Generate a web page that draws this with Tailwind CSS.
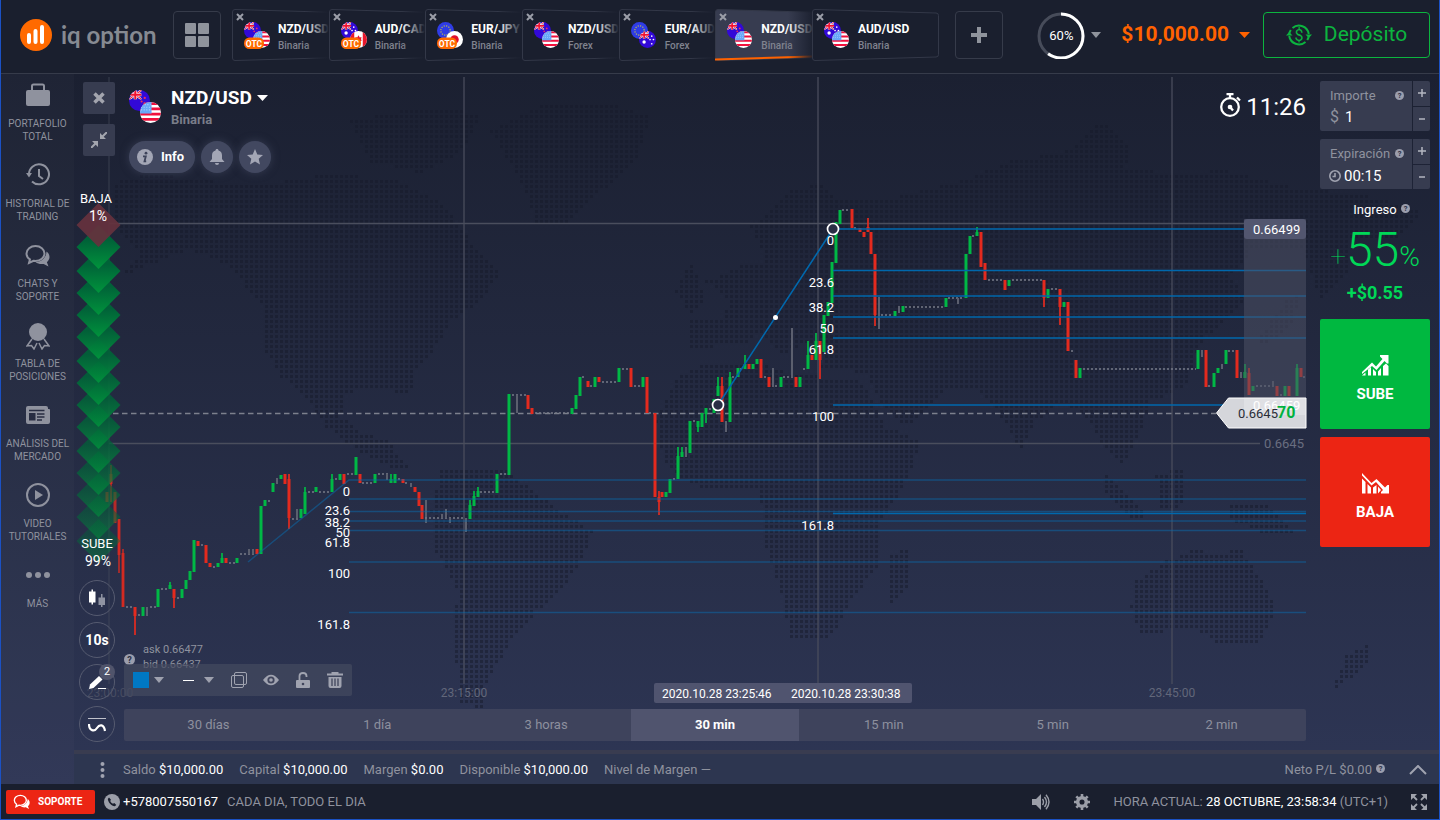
<!DOCTYPE html>
<html lang="es">

<head>
    <meta charset="UTF-8">
    <meta name="viewport" content="width=device-width, initial-scale=1.0">
    <title>IQ Option</title>
    <script src="https://cdn.jsdelivr.net/npm/@tailwindcss/browser@4"></script>
</head>

<body class="bg-[#1a1f2e] font-['Roboto',sans-serif] text-[#8f929e]">

<!-- shared symbols: flags and the help mark -->
<svg class="absolute size-0" aria-hidden="true">
    <defs>
        <clipPath id="round"><circle cx="10" cy="10" r="10"/></clipPath>
    </defs>
    <symbol id="jack" viewBox="0 0 12 9">
        <rect width="12" height="9" fill="#1c1bb0"/>
        <path d="M0 0l12 9M12 0L0 9" stroke="#fff" stroke-width="2"/>
        <path d="M0 0l12 9M12 0L0 9" stroke="#f01838" stroke-width="1"/>
        <path d="M6 0v9M0 4.500h12" stroke="#fff" stroke-width="3"/>
        <path d="M6 0v9M0 4.500h12" stroke="#f01030" stroke-width="2"/>
    </symbol>
    <symbol id="nz" viewBox="0 0 20 20">
        <g clip-path="url(#round)">
            <rect width="20" height="20" fill="#3209d8"/>
            <use href="#jack" width="12" height="9"/>
            <circle cx="15" cy="7.500" r="1.100" fill="#f0305a"/>
            <circle cx="15" cy="13" r="1.300" fill="#f0305a"/>
            <circle cx="12" cy="11" r="1" fill="#f0305a"/>
        </g>
    </symbol>
    <symbol id="au" viewBox="0 0 20 20">
        <g clip-path="url(#round)">
            <rect width="20" height="20" fill="#3209d8"/>
            <use href="#jack" width="12" height="9"/>
            <circle cx="6" cy="13" r="2" fill="#fff"/>
            <circle cx="15" cy="6" r="1" fill="#fff"/>
            <circle cx="17" cy="10" r="1" fill="#fff"/>
            <circle cx="13" cy="10" r="1" fill="#fff"/>
            <circle cx="15" cy="15" r="1" fill="#fff"/>
        </g>
    </symbol>
    <symbol id="us" viewBox="0 0 20 20">
        <g clip-path="url(#round)">
            <rect width="20" height="20" fill="#fff"/>
            <path d="M0 1.500h20M0 6.500h20M0 11.500h20M0 16.500h20" stroke="#f0103c" stroke-width="2.500"/>
            <rect width="11" height="11" fill="#68a8f8"/>
            <path d="M2 2.500h8M1 5h9M1 7.500h9" stroke="#a8d0ff" stroke-dasharray="1 1.500"/>
        </g>
    </symbol>
    <symbol id="ca" viewBox="0 0 20 20">
        <g clip-path="url(#round)">
            <rect width="20" height="20" fill="#fff"/>
            <path d="M0 0h5v20H0zM15 0h5v20h-5z" fill="#e8182c"/>
            <path d="M10 5l1.500 2.500 2-.5-.5 3 1 1-3 2v2h-2v-2l-3-2 1-1-.5-3 2 .5z" fill="#e8182c"/>
        </g>
    </symbol>
    <symbol id="jp" viewBox="0 0 20 20">
        <circle cx="10" cy="10" r="10" fill="#fff"/>
        <circle cx="10" cy="10" r="5" fill="#e0102c"/>
    </symbol>
    <symbol id="eu" viewBox="0 0 20 20">
        <circle cx="10" cy="10" r="10" fill="#2f3ce6"/>
        <circle cx="10" cy="10" r="5.500" fill="none" stroke="#b8b850" stroke-width="1.500" stroke-dasharray="1.400 1.480"/>
    </symbol>
    <symbol id="help" viewBox="0 0 12 12">
        <circle cx="6" cy="6" r="6" fill="#9b9ead"/>
        <text x="6" y="9.500" text-anchor="middle" font-size="10" font-weight="700" fill="#2a2f44">?</text>
    </symbol>
    <symbol id="chats" viewBox="0 0 26 24">
        <path d="M10.500 2C5.500 2 1.500 5.400 1.500 9.500c0 2.400 1.300 4.500 3.400 5.900L4 19l4.500-2.200c.7.100 1.300.2 2 .2 5 0 9-3.400 9-7.500S15.500 2 10.500 2z" fill="none" stroke="currentColor" stroke-width="2"/>
        <path d="M21.500 7.500c2 1.400 3 3.300 3 5.500 0 2-1 3.900-2.600 5.200l1.600 4.300-4.800-2.600c-3.200.5-6-.1-8.200-1.900 5.600 0 10.800-4 11-10.500z" fill="currentColor"/>
    </symbol>
    <symbol id="outline" viewBox="0 0 127 52" preserveAspectRatio="none">
        <path d="M3 .5L124 4q2.500 0 2.500 2.500v39q0 2.500-2.500 2.500L3 51.500Q.5 51.500.5 49V3Q.5.500 3 .5z" stroke="#333848"/>
    </symbol>
</svg>

<div class="flex min-h-screen flex-col border-x border-b border-[#1b51c4]">

    <header class="flex h-[74px] shrink-0 items-center border-b border-[#363b4a] bg-[#1a1f2e] pr-[9px] pb-[3px] pl-[19px]">
        <a href="#" class="flex w-[153px] shrink-0 items-center gap-[9px]" aria-label="iq option">
            <svg class="size-8" viewBox="0 0 32 32">
                <circle cx="16" cy="16" r="16" fill="#ff6a00"/>
                <path d="M9 16v7M15.500 12v11M22 8v15" stroke="#fff" stroke-width="4" stroke-linecap="round"/>
            </svg>
            <span class="font-[Lato] text-2xl leading-8 font-bold text-[#868a92]">iq option</span>
        </a>
        <button type="button" aria-label="Activos" class="flex size-12 shrink-0 items-center justify-center rounded border border-[#363b4a]">
            <svg class="size-6" viewBox="0 0 24 24" fill="#8f939c">
                <rect width="11" height="11" rx="1"/>
                <rect x="13" width="11" height="11" rx="1"/>
                <rect y="13" width="11" height="11" rx="1"/>
                <rect x="13" y="13" width="11" height="11" rx="1"/>
            </svg>
        </button>

        <nav class="ml-[11px] flex shrink-0">
            <div class="grid w-[580px] grid-cols-6" id="tabs"></div>
            <div class="w-[127px]" id="lastTab"></div>
        </nav>

        <button type="button" aria-label="Nueva" class="ml-4 flex size-12 shrink-0 items-center justify-center rounded border border-[#363b4a]">
            <svg class="size-4" viewBox="0 0 16 16"><path d="M8 0v16M0 8h16" stroke="#8f939c" stroke-width="4"/></svg>
        </button>

        <div class="ml-auto flex shrink-0 items-center">
            <button type="button" class="flex items-center gap-[6px]">
                <span class="relative flex size-12 items-center justify-center pt-[2px] text-[13px] text-white">
                    <svg class="absolute inset-0 size-12" viewBox="0 0 48 48" fill="none" stroke-width="3">
                        <circle cx="24" cy="25" r="22" stroke="#474c5a"/>
                        <circle cx="24" cy="25" r="22" stroke="#fff" pathLength="100" stroke-dasharray="60 40" transform="rotate(-90 24 25)"/>
                    </svg>
                    60%
                </span>
                <svg class="h-[6px] w-[10px]" viewBox="0 0 10 6"><path d="M0 0h10L5 6z" fill="#8f939c"/></svg>
            </button>
            <button type="button" class="ml-[20px] flex items-center gap-[10px] text-[21px] font-bold text-[#ff6200]">
                $10,000.00
                <svg class="h-[6px] w-[11px]" viewBox="0 0 11 6"><path d="M0 0h11L5.500 6z" fill="#ff6200"/></svg>
            </button>
            <button type="button" class="ml-[13px] flex h-[46px] w-[167px] items-center justify-center gap-3 rounded border border-[#0cb43f] text-[21px] text-[#0cb43f]">
                <svg class="h-[22px] w-[26px]" viewBox="0 0 26 22" fill="none" stroke="currentColor" stroke-width="2">
                    <path d="M6.500 4A10 10 0 0 1 22.800 10M3.200 12A10 10 0 0 0 19.500 18M3.200 10A10 10 0 0 1 4.800 6M22.800 12A10 10 0 0 1 21.200 16"/>
                    <path d="M0 11.500h6.500L3.200 8zM19.500 10.500H26L22.800 14z" fill="currentColor" stroke="none"/>
                    <text x="13" y="16.500" text-anchor="middle" font-size="16" fill="currentColor" stroke="none">$</text>
                </svg>
                Depósito
            </button>
        </div>
    </header>

    <div class="flex grow bg-linear-to-b from-[#1b2031] to-[#2e3655]">

        <nav class="flex w-[73px] shrink-0 flex-col bg-white/2 text-center text-[10px] leading-[13px] text-[#8f929e]">
            <a href="#" class="flex h-20 flex-col items-center pt-2">
                <svg class="h-7 w-6" viewBox="0 0 24 28" fill="currentColor"><path d="M2 8h20q2 0 2 2v12q0 2-2 2H2q-2 0-2-2V10q0-2 2-2z"/><path d="M6 9V4q0-1.500 1.500-1.500h9Q18 2.500 18 4v5" fill="none" stroke="currentColor" stroke-width="2"/></svg>
                <span class="mt-[7px]">PORTAFOLIO<br>TOTAL</span>
            </a>
            <a href="#" class="flex h-20 flex-col items-center pt-2">
                <svg class="h-7 w-6" viewBox="0 0 24 28" fill="none" stroke="currentColor" stroke-width="2"><path d="M3 13A10 10 0 1 1 6 19.500"/><path d="M13 7v7l4 3"/><path d="M0 11h6L3 15.500z" fill="currentColor" stroke="none"/></svg>
                <span class="mt-[7px]">HISTORIAL DE<br>TRADING</span>
            </a>
            <a href="#" class="flex h-20 flex-col items-center pt-2">
                <svg class="h-7 w-[26px]"><use href="#chats"/></svg>
                <span class="mt-[7px]">CHATS Y<br>SOPORTE</span>
            </a>
            <a href="#" class="flex h-20 flex-col items-center pt-2">
                <svg class="h-7 w-6" viewBox="0 0 24 28" fill="currentColor"><circle cx="12" cy="10" r="9"/><path d="M6 17l-5 7 4.500-.5L8 27l3-6M18 17l5 7-4.500-.5L16 27l-3-6" fill="none" stroke="currentColor" stroke-width="1.500"/></svg>
                <span class="mt-[7px]">TABLA DE<br>POSICIONES</span>
            </a>
            <a href="#" class="flex h-20 flex-col items-center pt-2">
                <svg class="h-7 w-6" viewBox="0 0 24 28"><path d="M2 4h18q2 0 2 2v1h1q1 0 1 1v12q0 2-2 2H2q-2 0-2-2V6q0-2 2-2z" fill="currentColor"/><path d="M3 8.500h15.500M11 12h7.500M11 15h7.500M11 18h5" stroke="#282d42" stroke-width="1.300"/><path d="M3 11h6.500v7.500H3z" fill="#282d42"/></svg>
                <span class="mt-[7px]">ANÁLISIS DEL<br>MERCADO</span>
            </a>
            <a href="#" class="flex h-20 flex-col items-center pt-2">
                <svg class="h-7 w-6" viewBox="0 0 24 28"><circle cx="12" cy="13" r="11" fill="none" stroke="currentColor" stroke-width="2"/><path d="M9 8l8 5-8 5z" fill="currentColor"/></svg>
                <span class="mt-[7px]">VIDEO<br>TUTORIALES</span>
            </a>
            <a href="#" class="flex h-20 flex-col items-center pt-2">
                <svg class="h-7 w-6" viewBox="0 0 24 28" fill="currentColor"><circle cx="3" cy="13" r="3"/><circle cx="12" cy="13" r="3"/><circle cx="21" cy="13" r="3"/></svg>
                <span class="mt-[7px]">MÁS</span>
            </a>
        </nav>

        <div class="flex min-w-0 grow flex-col">
            <main class="relative flex grow">
                <svg class="absolute inset-0 h-full w-full" viewBox="74 74 1365 676" preserveAspectRatio="xMidYMid slice" font-size="13" id="chart">
                    <defs>
                        <linearGradient id="rise" x1="0" y1="0" x2="0" y2="1">
                            <stop offset=".35" stop-color="#006238"/>
                            <stop offset="1" stop-color="#00943c"/>
                        </linearGradient>
                    </defs>
                    <path id="map" fill="#161a2a" fill-opacity=".5"/>

                    <g stroke="#4a4e5d">
                        <path d="M109 77v607" stroke-opacity=".45" stroke-width="1.500"/>
                        <path d="M464 77v607M818 77v607M1172 77v607" stroke-opacity=".85" stroke-width="1.500"/>
                        <path d="M109 223.500h1197" stroke-width="1.500"/>
                        <path d="M109 443.500h1151" stroke-width="1.600"/>
                    </g>
                    <path d="M113 413.500h1103" stroke="#7c808d" stroke-width="1.300" stroke-dasharray="5.500 3.500"/>

                    <g id="candles"></g>

                    <path d="M248 562L349 480h957M349 499h957M349 511.500h957M349 521h957M349 530.500h957M349 562h957M349 612.500h957" fill="none" stroke="#0a6cae" stroke-opacity=".5" stroke-width="1.500"/>
                    <path d="M718 405L833 229h473M833 270.500h473M833 296h473M833 317h473M833 338h473M833 405h473M833 513.500h473" fill="none" stroke="#0068ad" stroke-width="1.600"/>

                    <g fill="#fff" text-anchor="end">
                        <text x="350" y="496">0</text>
                        <text x="350" y="515">23.6</text>
                        <text x="350" y="527">38.2</text>
                        <text x="350" y="537">50</text>
                        <text x="350" y="547">61.8</text>
                        <text x="350" y="578">100</text>
                        <text x="350" y="629">161.8</text>
                        <text x="834" y="245">0</text>
                        <text x="834" y="287">23.6</text>
                        <text x="834" y="312">38.2</text>
                        <text x="834" y="333">50</text>
                        <text x="834" y="354">61.8</text>
                        <text x="834" y="421">100</text>
                        <text x="834" y="530">161.8</text>
                    </g>
                    <g fill="#2a2f45" stroke="#fff" stroke-width="1.700">
                        <circle cx="718" cy="405" r="5.500"/>
                        <circle cx="833" cy="229" r="5.500"/>
                    </g>
                    <circle cx="775.500" cy="317.500" r="2.500" fill="#fff"/>

                    <!-- price scale -->
                    <path d="M1244 219h62v194h-62z" fill="#4d5064" fill-opacity=".55"/>
                    <rect x="1244" y="219" width="62" height="20" rx="3" fill="#52566f"/>
                    <text x="1253" y="234" fill="#fff">0.66499</text>
                    <path d="M1216.500 413l12-15h77.500v30h-77.500z" fill="#d5d6db" stroke="#fff"/>
                    <rect x="1244" y="399" width="61" height="16" fill="#fff" fill-opacity=".25"/>
                    <text x="1253" y="410" fill="#fff">0.66459</text>
                    <text x="1238" y="418" fill="#2a2d38">0.6645</text>
                    <text x="1277" y="418" font-size="16" font-weight="700" fill="#00b23e">70</text>
                    <text x="1264" y="448" fill="#696e80">0.6645</text>

                    <!-- time scale -->
                    <g fill="#62677a" text-anchor="middle" font-size="12">
                        <text x="110" y="697" fill="#474c62">23:00:00</text>
                        <text x="464" y="697">23:15:00</text>
                        <text x="1172" y="697">23:45:00</text>
                    </g>
                    <rect x="654" y="683" width="258" height="20" rx="2" fill="#50546f"/>
                    <g fill="#fff" font-size="12">
                        <text x="662" y="698">2020.10.28 23:25:46</text>
                        <text x="791" y="698">2020.10.28 23:30:38</text>
                    </g>

                    <g id="mood"></g>
                    <g fill="#fff" text-anchor="middle">
                        <text x="96" y="203">BAJA</text>
                        <text x="98" y="221" font-size="14">1%</text>
                        <text x="97" y="548">SUBE</text>
                        <text x="98" y="566" font-size="14">99%</text>
                    </g>
                </svg>

                <section class="relative flex min-w-0 grow flex-col justify-between pl-[5px] pb-2">
                    <div class="flex pt-2 pl-1">
                        <div class="flex flex-col gap-[10px]">
                            <button type="button" aria-label="Cerrar" class="flex size-8 items-center justify-center rounded-xs bg-[#373c50]">
                                <svg class="size-3" viewBox="0 0 12 12"><path d="M1.500 1.500l9 9M10.500 1.500l-9 9" stroke="#a3a5ae" stroke-width="3.500"/></svg>
                            </button>
                            <button type="button" aria-label="Reducir" class="flex size-8 items-center justify-center rounded-xs bg-[#373c50]">
                                <svg class="size-4" viewBox="0 0 16 16" stroke="#a3a5ae" stroke-width="2"><path d="M0 16l5-5M16 0l-5 5"/><path d="M1 9h6v6zM9 1v6h6z" fill="#a3a5ae" stroke="none"/></svg>
                            </button>
                        </div>
                        <div class="ml-[14px] flex flex-col">
                            <button type="button" class="flex text-left">
                                <svg class="mt-2 h-[33px] w-8" viewBox="0 0 32 33"><use href="#nz" width="21" height="21"/><use href="#us" x="11" y="12" width="21" height="21"/></svg>
                                <span class="ml-[10px]">
                                    <span class="mt-1 flex h-6 items-center gap-[5px] text-[19px] leading-6 font-bold text-white">NZD/USD
                                        <svg class="h-[6px] w-[11px]" viewBox="0 0 11 6"><path d="M0 0h11L5.500 6z" fill="#fff"/></svg>
                                    </span>
                                    <span class="block text-[13px] leading-5 font-bold text-[#797d89]">Binaria</span>
                                </span>
                            </button>
                            <div class="mt-[11px] flex gap-[6px]">
                                <button type="button" class="flex h-8 items-center gap-2 rounded-full bg-[#424860] px-2 pr-[11px] text-[13px] font-bold text-white shadow-[0_0_8px_#363c52]">
                                    <svg class="size-4" viewBox="0 0 16 16"><circle cx="8" cy="8" r="8" fill="#a3a6b5"/><circle cx="9" cy="4.200" r="1.400" fill="#3d435a"/><path d="M6 7.300h2.800l-1.300 5h1.700" fill="none" stroke="#3d435a" stroke-width="1.800"/></svg>
                                    Info
                                </button>
                                <button type="button" aria-label="Alertas" class="flex size-8 items-center justify-center rounded-full bg-[#424860] shadow-[0_0_8px_#363c52]">
                                    <svg class="size-4" viewBox="0 0 16 16" fill="#a3a6b5"><path d="M8 0c1 0 1.500.6 1.500 1.500C12 2 13 4 13 6.500V10l2.500 3H.5L3 10V6.500C3 4 4 2 6.500 1.500 6.500.600 7 0 8 0zM6 14h4q0 2-2 2t-2-2z"/></svg>
                                </button>
                                <button type="button" aria-label="Favorito" class="flex size-8 items-center justify-center rounded-full bg-[#424860] shadow-[0_0_8px_#363c52]">
                                    <svg class="size-4" viewBox="0 0 16 16" fill="#a3a6b5"><path d="M8 0l2.300 5.400 5.700.5-4.300 3.900L13 15.500 8 12.500l-5 3 1.300-5.700L0 5.900l5.700-.5z"/></svg>
                                </button>
                            </div>
                        </div>
                        <div class="ml-auto flex h-[50px] items-center gap-[5px] text-2xl text-white">
                            <svg class="mb-1 h-6 w-[22px]" viewBox="0 0 22 24" fill="none" stroke="#fff" stroke-width="2.300"><circle cx="11" cy="14" r="8.800"/><path d="M7.500 1.200h7M11 1v4M18 4.500l3 3M11 14l3 3.500"/><circle cx="11" cy="14" r="1.200" fill="#fff"/></svg>
                            11:26
                        </div>
                    </div>

                    <div class="flex items-end gap-[9px]">
                        <div class="flex flex-col gap-[6px]">
                            <button type="button" aria-label="Tipo de gráfico" class="flex size-9 items-center justify-center rounded-full border border-[#565b70]">
                                <svg class="size-[18px]" viewBox="0 0 18 18"><path d="M1 2.500h6.500v11H1zM3.500 .5h1.500v15H3.500z" fill="#fff"/><path d="M10.500 8.500H17V16h-6.500zM13 5h1.500v13H13z" fill="#8f93a2"/></svg>
                            </button>
                            <button type="button" class="size-9 rounded-full border border-[#565b70] text-sm font-bold text-white">10s</button>
                            <button type="button" aria-label="Dibujos" class="relative flex size-9 items-center justify-center rounded-full border border-[#565b70]">
                                <svg class="size-[18px]" viewBox="0 0 18 18"><path d="M1 16l1-4.500L11 3l3.500 3.500-9 8.500z" fill="#fff"/><path d="M10 15.500h8" stroke="#fff"/></svg>
                                <span class="absolute -top-px -right-px size-4 rounded-full bg-[#50546b] text-[11px] leading-4 text-white">2</span>
                            </button>
                            <button type="button" aria-label="Indicadores" class="flex size-9 items-center justify-center rounded-full border border-[#565b70]">
                                <svg class="size-[18px]" viewBox="0 0 18 18" fill="none" stroke="#fff"><path d="M0 3.500h18" stroke-opacity=".7"/><path d="M1 9c0 7 5.500 8 8 4s7-4 8 3" stroke-width="2.200"/></svg>
                            </button>
                        </div>
                        <div class="flex grow flex-col items-start pb-px">
                            <div class="-mb-2 flex items-center gap-2 text-[11px] leading-[15px]">
                                <svg class="mt-1 size-[11px]"><use href="#help"/></svg>
                                <span>ask 0.66477<br>bid 0.66437</span>
                            </div>
                            <div class="flex h-8 items-center rounded-xs bg-[#454a60]/70 px-[9px]">
                                <button type="button" aria-label="Color" class="flex items-center gap-[5px]">
                                    <span class="size-4 bg-[#0078c4]"></span>
                                    <svg class="h-[6px] w-[10px]" viewBox="0 0 10 6"><path d="M0 0h10L5 6z" fill="#9ea1ae"/></svg>
                                </button>
                                <button type="button" aria-label="Grosor" class="ml-[19px] flex items-center gap-[10px]">
                                    <span class="h-px w-[11px] bg-white"></span>
                                    <svg class="h-[6px] w-[10px]" viewBox="0 0 10 6"><path d="M0 0h10L5 6z" fill="#9ea1ae"/></svg>
                                </button>
                                <button type="button" aria-label="Duplicar" class="ml-[17px]">
                                    <svg class="size-4" viewBox="0 0 16 16" fill="none" stroke="#a0a3b0"><rect x="3.500" y=".5" width="12" height="12" rx="1.500"/><rect x=".5" y="3.500" width="12" height="12" rx="1.500"/></svg>
                                </button>
                                <button type="button" aria-label="Ocultar" class="ml-4">
                                    <svg class="size-4" viewBox="0 0 16 16"><path d="M0 8Q8-2.500 16 8 8 18.500 0 8z" fill="#a0a3b0"/><circle cx="8" cy="8" r="3.600" fill="#40455c"/><circle cx="8" cy="8" r="1.800" fill="#a0a3b0"/></svg>
                                </button>
                                <button type="button" aria-label="Bloquear" class="ml-4">
                                    <svg class="size-4" viewBox="0 0 16 16"><rect x="1" y="8" width="14" height="8" rx="1" fill="#a0a3b0"/><path d="M4.500 8V4q0-3 3.500-3t3.500 3v1" fill="none" stroke="#a0a3b0" stroke-width="1.800"/><circle cx="8" cy="12" r="1.300" fill="#40455c"/></svg>
                                </button>
                                <button type="button" aria-label="Eliminar" class="ml-4">
                                    <svg class="size-4" viewBox="0 0 16 16" fill="#a0a3b0"><path d="M0 1.500h4.500V0h7v1.500H16v2H0zM1.500 5h13v9q0 2-2 2h-9q-2 0-2-2z"/><path d="M5 6.500v7.500M8 6.500v7.500M11 6.500v7.500" stroke="#40455c" stroke-width="1.300"/></svg>
                                </button>
                            </div>
                            <div class="mt-[13px] grid h-8 w-full grid-cols-7 overflow-hidden rounded-xs bg-[#3e435c] text-[13px] text-[#8d909e]">
                                <button type="button">30 días</button>
                                <button type="button">1 día</button>
                                <button type="button">3 horas</button>
                                <button type="button" class="bg-[#50546e] font-bold text-white">30 min</button>
                                <button type="button">15 min</button>
                                <button type="button">5 min</button>
                                <button type="button">2 min</button>
                            </div>
                        </div>
                    </div>
                </section>

                <aside class="relative flex w-[133px] shrink-0 flex-col gap-2 pt-[7px] pr-[9px] pl-[14px]">
                    <div class="flex h-[50px] gap-px overflow-hidden rounded-xs">
                        <div class="flex grow flex-col bg-[#373c50] px-[10px] pt-[6px]">
                            <label for="amount" class="flex items-center justify-between text-[13px] leading-[18px]">Importe
                                <svg class="-mr-[2px] mb-[2px] size-[9px]"><use href="#help"/></svg>
                            </label>
                            <span class="flex h-6 items-center gap-[6px] text-base leading-6">$
                                <input id="amount" type="text" value="1" class="w-10 text-[15px] text-white">
                            </span>
                        </div>
                        <div class="flex w-[17px] flex-col gap-px text-[#b4b6c0]">
                            <button type="button" aria-label="Aumentar importe" class="flex grow items-center justify-center bg-[#373c50]"><svg class="size-2" viewBox="0 0 8 8"><path d="M4 0v8M0 4h8" stroke="currentColor" stroke-width="1.500"/></svg></button>
                            <button type="button" aria-label="Reducir importe" class="flex grow items-center justify-center bg-[#373c50]"><svg class="size-2" viewBox="0 0 8 8"><path d="M1 4h6" stroke="currentColor" stroke-width="1.500"/></svg></button>
                        </div>
                    </div>
                    <div class="flex h-[50px] gap-px overflow-hidden rounded-xs">
                        <div class="flex grow flex-col bg-[#373c50] px-[10px] pt-[6px]">
                            <label for="expiry" class="flex items-center justify-between text-[13px] leading-[18px]">Expiración
                                <svg class="-mr-[2px] mb-[2px] size-[9px]"><use href="#help"/></svg>
                            </label>
                            <span class="-ml-px flex h-[26px] items-center gap-[3px]">
                                <svg class="size-3 shrink-0" viewBox="0 0 12 12" fill="none" stroke="#a0a3b0" stroke-width="1.600"><circle cx="6" cy="6" r="5.200"/><path d="M6 3v3.500H3.500"/></svg>
                                <input id="expiry" type="text" value="00:15" class="w-11 text-[15px] text-white">
                            </span>
                        </div>
                        <div class="flex w-[17px] flex-col gap-px text-[#b4b6c0]">
                            <button type="button" aria-label="Aumentar expiración" class="flex grow items-center justify-center bg-[#373c50]"><svg class="size-2" viewBox="0 0 8 8"><path d="M4 0v8M0 4h8" stroke="currentColor" stroke-width="1.500"/></svg></button>
                            <button type="button" aria-label="Reducir expiración" class="flex grow items-center justify-center bg-[#373c50]"><svg class="size-2" viewBox="0 0 8 8"><path d="M1 4h6" stroke="currentColor" stroke-width="1.500"/></svg></button>
                        </div>
                    </div>
                    <div class="flex h-[114px] flex-col items-center pt-[3px] text-[#00d857]">
                        <p class="flex items-center gap-1 pl-[13px] text-[13px] leading-5 text-white">Ingreso <svg class="mb-1 size-[9px]"><use href="#help"/></svg></p>
                        <p class="mt-[6px] text-[28px] leading-[48px] font-thin">+<span class="text-5xl font-light">55</span><span class="font-light">%</span></p>
                        <p class="text-lg leading-6 font-bold">+$0.55</p>
                    </div>
                    <button type="button" class="flex h-[110px] flex-col items-center justify-center gap-2 rounded-xs bg-[#00b840] pt-[10px] text-[15px] leading-5 font-bold text-white">
                        <svg class="h-[22px] w-[27px]" viewBox="0 0 27 22" fill="#fff"><path d="M0 18L10 8.500l4 4L20.500 5 18 2.500V1h8.500v8.500H25L22.500 7 14.500 16l-4.500-4L0 20z"/><path d="M0 21.500h3.500V18.500zM6 15.500v6h3V13zM11 15v6.500h3V18zM16 17.500v4h3V14zM21 12v9.500h5.500V12L24 9.500z"/></svg>
                        SUBE
                    </button>
                    <button type="button" class="flex h-[110px] flex-col items-center justify-center gap-2 rounded-xs bg-[#ec2514] pt-[10px] text-[15px] leading-5 font-bold text-white">
                        <svg class="h-[22px] w-[27px]" viewBox="0 0 27 22" fill="#fff"><path d="M0 1v2.500l9.500 10L14 10l7 8-2 2v1.500h8V13h-1.500L23 15.500 14.500 7l-5 4z"/><path d="M0 6.500v15h3.500V10zM5.500 12v9.500H9V15.500zM11 15.500v6h3.500V13zM16 14.500v7l3-3.500z"/></svg>
                        BAJA
                    </button>
                </aside>
            </main>

            <div class="flex h-[34px] shrink-0 items-center gap-4 border-t-4 border-[#393c50] bg-[#2d3650] pt-[2px] pr-3 pl-[26px] text-[13px]">
                <button type="button" aria-label="Opciones" class="mr-[2px]">
                    <svg class="h-4 w-[5px]" viewBox="0 0 5 16" fill="#a0a3b0"><circle cx="2.500" cy="2" r="2"/><circle cx="2.500" cy="8" r="2"/><circle cx="2.500" cy="14" r="2"/></svg>
                </button>
                <span>Saldo <b class="font-normal text-white">$10,000.00</b></span>
                <span>Capital <b class="font-normal text-white">$10,000.00</b></span>
                <span>Margen <b class="font-normal text-white">$0.00</b></span>
                <span>Disponible <b class="font-normal text-white">$10,000.00</b></span>
                <span>Nivel de Margen —</span>
                <span class="ml-auto flex items-center gap-1">Neto P/L $0.00 <svg class="mb-[3px] size-[9px]"><use href="#help"/></svg></span>
                <button type="button" aria-label="Desplegar" class="ml-2">
                    <svg class="h-[10px] w-[18px]" viewBox="0 0 18 10"><path d="M1 9l8-8 8 8" fill="none" stroke="#a0a3b0" stroke-width="2"/></svg>
                </button>
            </div>
        </div>
    </div>

    <footer class="flex h-[35px] shrink-0 items-center bg-[#1a1f2e] pr-3 pl-[5px] text-[13px]">
        <button type="button" class="flex h-6 w-[89px] items-center gap-[7px] rounded-xs bg-[#ec2514] pl-[7px] text-[10px] font-bold text-white">
            <svg class="h-4 w-[18px]"><use href="#chats"/></svg>
            SOPORTE
        </button>
        <svg class="ml-[9px] size-4" viewBox="0 0 16 16"><circle cx="8" cy="8" r="8" fill="#9b9ea8"/><path d="M5 3.500L3.800 5c.4 3.500 3.500 6.800 7 7.300l1.500-1.300-2-2-1.300.8C7.800 9.300 6.700 8.200 6.200 7L7 5.700z" fill="#1a1f2e"/></svg>
        <a href="#" class="ml-[3px] text-white">+578007550167</a>
        <span class="ml-[9px]">CADA DIA, TODO EL DIA</span>

        <button type="button" aria-label="Sonido" class="ml-auto">
            <svg class="h-4 w-[18px]" viewBox="0 0 18 16" fill="#9b9ea8"><path d="M0 5h4l5-5v16l-5-5H0z"/><path d="M10.500 5q2 3 0 6M12.500 3q4 5 0 10M14 .8q6 7.200 0 14.400" fill="none" stroke="#9b9ea8" stroke-width="1.400"/></svg>
        </button>
        <button type="button" aria-label="Ajustes" class="ml-6">
            <svg class="size-4" viewBox="0 0 16 16" fill="none" stroke="#9b9ea8"><circle cx="8" cy="8" r="4.300" stroke-width="3.500"/><path d="M8 0v3M8 13v3M0 8h3M13 8h3M2.300 2.300l2 2M11.700 11.700l2 2M2.300 13.700l2-2M11.700 4.300l2-2" stroke-width="2.600"/></svg>
        </button>
        <span class="ml-[23px]">HORA ACTUAL: <b class="font-normal text-white">28 OCTUBRE, 23:58:34</b> (UTC+1)</span>
        <button type="button" aria-label="Pantalla completa" class="ml-[23px]">
            <svg class="size-4" viewBox="0 0 16 16" fill="#a0a3ac" stroke="#a0a3ac" stroke-width="1.800"><path d="M2 2l4 4M14 2l-4 4M2 14l4-4M14 14l-4-4"/><path d="M0 0h6L0 6zM10 0h6v6zM0 10v6h6zM16 10v6h-6z" stroke="none"/></svg>
        </button>
    </footer>
</div>

<script>
    const tabs = [
        {pair: "NZD/USD", kind: "Binaria", a: "nz", b: "us", otc: true},
        {pair: "AUD/CAD", kind: "Binaria", a: "au", b: "ca", otc: true},
        {pair: "EUR/JPY", kind: "Binaria", a: "eu", b: "jp", otc: true},
        {pair: "NZD/USD", kind: "Forex", a: "nz", b: "us"},
        {pair: "EUR/AUD", kind: "Forex", a: "eu", b: "au"},
        {pair: "NZD/USD", kind: "Binaria", a: "nz", b: "us", active: true},
        {pair: "AUD/USD", kind: "Binaria", a: "au", b: "us"},
    ];

    function tabHtml(t, last) {
        const fade = t.active
            ? "from-transparent to-[#1a1f2e]/90"
            : "from-transparent to-[#1a1f2e]";
        return `
        <div class="relative h-[52px] overflow-hidden">
            <svg class="absolute top-0 left-0 h-[52px] w-[127px] ${t.active ? "fill-[#373c50]" : "fill-[#1a1f2e]"}"><use href="#outline" width="127" height="52"/>
                ${t.active ? '<path d="M0 50.500l97-3" stroke="#ff6200" stroke-width="2"/>' : ""}
            </svg>
            <button type="button" aria-label="Cerrar ${t.pair}" class="absolute top-1 left-1">
                <svg class="size-2" viewBox="0 0 8 8"><path d="M1 1l6 6M7 1L1 7" stroke="#9b9ea8" stroke-width="2"/></svg>
            </button>
            <button type="button" class="relative flex h-full w-[127px] pt-[13px] pl-3 text-left">
                <svg class="h-[28px] w-[27px] shrink-0" viewBox="0 0 27 28">
                    <use href="#${t.a}" width="17" height="17"/>
                    <use href="#${t.b}" x="${t.otc ? 9 : 8}" y="9" width="17" height="17"/>
                    ${t.otc ? '<rect x="0" y="15.500" width="20" height="11.500" rx="5.500" fill="#ff6a00"/><text x="10" y="24.500" text-anchor="middle" font-size="8.500" font-weight="700" fill="#fff">OTC</text>' : ""}
                </svg>
                <span class="ml-[7px]">
                    <span class="block text-xs leading-[14px] font-bold text-white">${t.pair}</span>
                    <span class="mt-[3px] block text-[10px] leading-[14px] font-medium text-[#80838f]">${t.kind}</span>
                </span>
            </button>
            ${last ? "" : `<div class="pointer-events-none absolute inset-y-0 right-0 w-6 bg-linear-to-r ${fade}"></div>`}
        </div>`;
    }

    document.getElementById("tabs").innerHTML = tabs.slice(0, 6).map(t => tabHtml(t)).join("");
    document.getElementById("lastTab").innerHTML = tabHtml(tabs[6], true);

    // colour x open close [wick top, wick bottom]; "w" is a bare wick, "d" a flat run (x1 x2 y)
    const series = `r 107 492 502;r 111 474 484 465 502;r 115 492 523;r 119 519 555 519 573;r 123 553 607 549 607;d 126 132 607;
r 135 607 616 607 635;d 138 141 615;g 143 607 616;w 147 607 616;d 150 157 607;g 158 589 607;d 161 168 589;g 170 585 589 582 589;
r 174 589 598 589 608;d 177 180 598;g 182 589 598;g 186 580 589;g 190 571 580;g 194 540 572;r 198 541 546;d 201 204 545;r 206 545 563;
r 210 563 567;d 213 216 567;g 218 563 567;g 222 558 563 553 563;r 226 558 563;d 229 236 563;g 237 558 563;d 240 256 554;w 249 549 554;w 253 549 554;
r 257 549 554;g 261 506 554;g 265 500 506;d 268 271 501;g 273 483 492;w 277 478 484;g 281 475 479;r 285 474 484 474 484;r 289 479 518 474 529;
d 292 299 519;w 297 509 518;g 301 509 518;g 305 492 514 487 514;d 308 315 492;g 316 487 492;d 319 330 492;g 332 479 492 474 492;d 335 338 479;
g 340 474 480;r 344 474 484;d 347 353 474;g 356 457 475;r 360 474 483;d 362 373 483;g 375 474 483;d 378 390 474;w 387 474 480;g 391 479 483 474 483;
g 395 474 483;d 398 401 479;r 403 479 483;d 405 409 483;w 411 483 487;r 415 487 492;r 419 492 506;r 422 505 519;w 426 500 523;d 425 465 518;
w 442 514 518;w 446 509 518;w 450 518 523;w 466 518 532;g 470 505 519 500 519;g 474 496 506 491 506;g 478 491 497 487 497;d 480 495 492;g 497 474 493;d 500 507 474;
g 509 394 475;d 512 527 395;w 517 395 413;r 528 395 409;r 532 408 414;d 535 570 413;g 572 408 414;g 576 395 409;g 580 377 396;d 582 586 377;
r 588 381 387;d 590 593 386;g 595 377 387;r 599 377 382;d 602 618 382;g 619 368 382;d 622 629 369;r 631 368 387;d 634 641 386;g 643 377 387;
r 647 377 413;d 649 653 413;r 655 413 497;r 659 497 502 491 515;r 662 492 497;g 666 492 497;g 670 479 493;d 673 677 479;g 678 456 479 447 479;
g 682 452 457 447 457;w 686 447 457;g 690 421 453;d 693 697 421;g 698 421 427 421 432;g 702 413 427;g 706 408 414 408 423;d 709 712 409;g 714 399 413;
g 718 386 396 377 396;r 722 386 422 377 422;w 726 421 432;g 730 377 422 372 422;d 732 736 377;g 738 368 377;d 740 744 369;g 745 364 369 355 369;r 749 364 369;
g 753 364 369;g 757 359 364;r 761 359 378;d 764 767 377;r 769 377 387;w 773 368 387;d 775 779 386;g 781 377 387;d 783 795 377;w 792 328 377;r 796 377 387;
g 800 377 387;d 803 807 369;g 808 355 369 341 369;r 812 355 360;g 816 341 360 333 360;r 820 341 360 341 379;g 824 315 352;g 828 302 316;g 832 262 303;g 836 222 263;
g 840 210 224;d 842 850 210;r 852 209 228;d 854 858 228;r 860 228 232;r 864 232 237;r 868 227 232 218 232;r 871 232 254;r 875 254 315 254 326;w 879 297 329;
d 881 893 315;g 895 311 316;w 899 306 313;g 903 306 312;d 905 944 307;g 946 298 307;d 948 964 298;w 958 298 304;g 966 254 298;g 970 236 254;d 972 976 236;
g 977 232 236 227 236;r 981 232 267;r 985 263 280;d 988 1004 280;r 1005 280 290;g 1009 280 286;d 1012 1043 280;r 1044 280 298 280 307;g 1048 289 298;
d 1051 1059 289;r 1060 289 307 289 325;g 1064 302 307;r 1068 302 351;d 1071 1074 351;r 1076 360 378;g 1080 368 378;d 1083 1196 369;g 1198 350 369;
w 1202 350 357;r 1206 350 387;d 1208 1212 386;g 1214 373 387;g 1218 368 373;w 1222 364 369;g 1226 350 364;d 1228 1236 351;r 1237 350 378;w 1241 372 378;
g 1245 372 378 364 378;r 1249 373 395 368 395;g 1253 386 391;d 1256 1272 386;w 1273 381 387;r 1277 386 396;d 1280 1283 395;g 1285 386 396;r 1289 386 396;
g 1297 368 396 364 396;r 1301 368 377;d 1303 1306 377`;

    const colours = {g: "#00b845", r: "#e42a1e", w: "#5b5f6e"};
    document.getElementById("candles").innerHTML = series.split(";").map(row => {
        const [type, ...n] = row.trim().split(" ");
        if (type === "d") {
            return `<path d="M${n[0]} ${n[2]}H${n[1]}" stroke="#777b88" stroke-width="1.500" stroke-dasharray="2 2"/>`;
        }
        const [x, top, bottom, high, low] = n.map(Number);
        if (type === "w") {
            return `<rect x="${x - 1}" y="${top}" width="2" height="${bottom - top}" fill="${colours.w}"/>`;
        }
        const dim = x < 130 ? 0.75 : 1;
        const wick = high ? `<rect x="${x - 1}" y="${high}" width="2" height="${low - high}" fill="${colours[type]}" opacity="${dim * 0.85}"/>` : "";
        return `${wick}<rect x="${x - 1.5}" y="${top}" width="3" height="${bottom - top}" fill="${colours[type]}" opacity="${dim}"/>`;
    }).join("");

    // mood column, drawn from the bottom so that each diamond lies over the next one
    const rows = [247, 271, 293, 315, 337, 361, 383, 405, 427, 451, 473, 495, 517, 541];
    document.getElementById("mood").innerHTML = rows.map((y, i) =>
        `<path d="M98.500 ${y - 22}l22 22-22 22-22-22z" fill="url(#rise)" opacity="${(1 - (i / 13) ** 2 * 0.55).toFixed(2)}"/>`
    ).reverse().join("") + '<path d="M98.500 203l22 22-22 22-22-22z" fill="#65313d" fill-opacity=".93"/>';

    // dotted world map
    const lands = [
        [[112, 182], [150, 172], [250, 185], [330, 172], [400, 180], [440, 200], [470, 240], [500, 270], [478, 300], [450, 320], [435, 345], [415, 370], [408, 395], [375, 385], [345, 392], [340, 415], [362, 432], [385, 438], [410, 470], [395, 470], [355, 448], [325, 425], [300, 390], [280, 375], [265, 350], [264, 310], [245, 285], [225, 262], [190, 248], [150, 262], [120, 275], [140, 250], [114, 225]],
        [[350, 120], [420, 105], [480, 112], [460, 150], [420, 172], [370, 160]],
        [[490, 130], [540, 105], [610, 102], [650, 115], [635, 160], [600, 190], [560, 225], [535, 222], [520, 180]],
        [[440, 466], [500, 466], [530, 488], [560, 510], [592, 530], [580, 560], [560, 590], [535, 610], [510, 640], [495, 665], [480, 690], [485, 712], [460, 700], [452, 640], [456, 590], [435, 550], [430, 510]],
        [[688, 350], [690, 318], [720, 320], [730, 300], [705, 280], [740, 265], [765, 262], [750, 225], [790, 190], [820, 182], [840, 200], [880, 200], [960, 180], [1010, 160], [1065, 150], [1100, 120], [1130, 148], [1125, 165], [1180, 175], [1220, 168], [1290, 185], [1370, 195], [1420, 210], [1400, 235], [1350, 240], [1345, 275], [1320, 300], [1300, 245], [1250, 250], [1230, 275], [1245, 300], [1225, 320], [1205, 335], [1195, 355], [1185, 385], [1150, 400], [1140, 430], [1120, 465], [1100, 440], [1085, 415], [1060, 400], [1035, 420], [1020, 450], [1000, 415], [980, 390], [950, 385], [935, 400], [905, 425], [880, 400], [865, 372], [820, 365], [830, 345], [800, 345], [780, 352], [760, 330], [740, 345], [715, 345]],
        [[675, 378], [700, 362], [750, 360], [790, 372], [860, 380], [885, 425], [920, 440], [905, 480], [880, 520], [880, 560], [850, 600], [830, 635], [790, 640], [780, 590], [765, 545], [758, 488], [720, 488], [690, 484], [662, 460], [655, 420]],
        [[890, 555], [908, 545], [905, 590], [890, 605]],
        [[1135, 580], [1165, 560], [1190, 548], [1220, 552], [1240, 548], [1265, 585], [1275, 610], [1255, 645], [1215, 640], [1190, 625], [1140, 635], [1130, 605]],
        [[1100, 470], [1125, 490], [1145, 515], [1130, 518], [1105, 490]],
        [[1155, 475], [1185, 465], [1180, 505], [1160, 510]],
        [[1225, 500], [1270, 505], [1300, 535], [1260, 530], [1230, 518]],
        [[1285, 300], [1300, 290], [1290, 325], [1262, 345], [1258, 335]],
        [[1345, 655], [1370, 640], [1365, 665], [1330, 690]],
        [[672, 290], [690, 262], [705, 300], [690, 312]],
    ];

    function inside(x, y, poly) {
        let hit = false;
        for (let i = 0, j = poly.length - 1; i < poly.length; j = i++) {
            const [xi, yi] = poly[i], [xj, yj] = poly[j];
            if ((yi > y) !== (yj > y) && x < (xj - xi) * (y - yi) / (yj - yi) + xi) hit = !hit;
        }
        return hit;
    }

    let dots = "";
    for (let y = 100; y < 720; y += 5) {
        for (let x = 110; x < 1430; x += 5) {
            if (lands.some(land => inside(x, y, land))) dots += `M${x} ${y}h3v3h-3z`;
        }
    }
    document.getElementById("map").setAttribute("d", dots);
</script>
</body>

</html>
